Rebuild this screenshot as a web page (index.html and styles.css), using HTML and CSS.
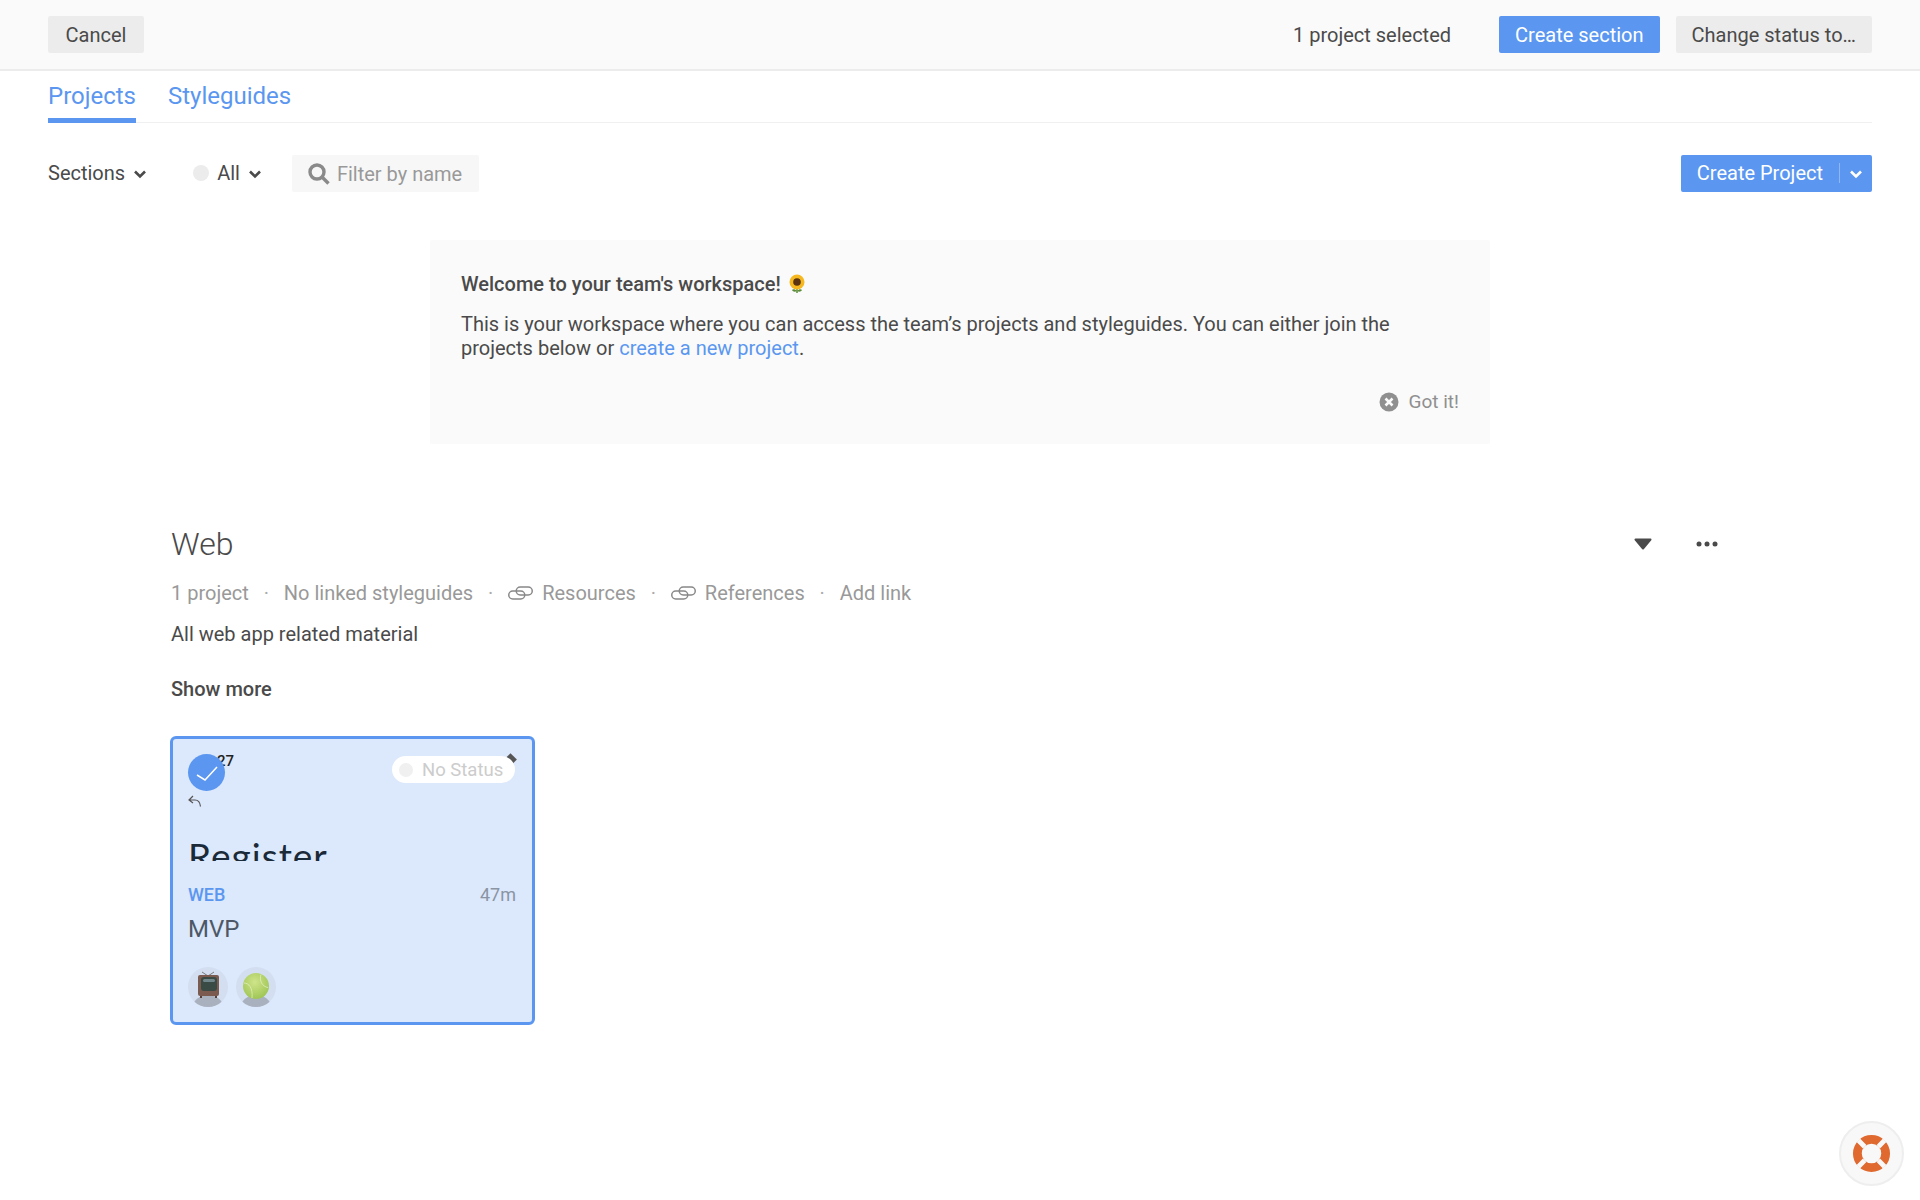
FILE: index.html
```html
<!DOCTYPE html>
<html lang="en">
<head>
	<meta charset="UTF-8">
	<title>Projects</title>
	<link rel="stylesheet" href="styles.css">
</head>
<body>
	<header class="action_bar">
		<button class="btn btn_grey cancel">Cancel</button>
		<span class="selected_count">1 project selected</span>
		<button class="btn btn_blue create_section">Create section</button>
		<button class="btn btn_grey change_status">Change status to…</button>
	</header>

	<nav class="tabs">
		<a class="tab tab_active">Projects</a>
		<a class="tab">Styleguides</a>
	</nav>

	<div class="filters">
		<span class="filter_item">Sections
			<svg class="chevron" viewBox="0 0 14 10"><path d="M2 2.5l5 5 5-5" /></svg>
		</span>
		<span class="filter_item status_filter"><i class="status_dot"></i>All
			<svg class="chevron" viewBox="0 0 14 10"><path d="M2 2.5l5 5 5-5" /></svg>
		</span>
		<label class="search">
			<svg class="search_icon" viewBox="0 0 22 22"><circle cx="9" cy="9" r="7" /><path d="M14 14l6.500 6.500" /></svg>
			Filter by name
		</label>
		<div class="create_project">
			<span class="create_label">Create Project</span>
			<svg class="chevron chevron_white" viewBox="0 0 14 10"><path d="M2 2.5l5 5 5-5" /></svg>
		</div>
	</div>

	<section class="welcome">
		<h3 class="welcome_title">Welcome to your team's workspace!
			<svg class="sunflower" viewBox="0 0 20 20">
				<path d="M10 13v6" stroke="#5b8c3a" stroke-width="1.5" />
				<path d="M10 17c-2-2-4-2-5-1 1 2 3 2 5 1zM10 17c2-2 4-2 5-1-1 2-3 2-5 1z" fill="#5b8c3a" />
				<circle cx="10" cy="8" r="7.5" fill="#f5b821" />
				<circle cx="10" cy="8" r="3.8" fill="#5a3312" />
			</svg>
		</h3>
		<p class="welcome_text">This is your workspace where you can access the team’s projects and styleguides. You can either join the projects below or <a class="link">create a new project</a>.</p>
		<div class="got_it">
			<svg class="got_it_icon" viewBox="0 0 20 20"><circle cx="10" cy="10" r="9.5" fill="#8f8f8f" /><path d="M6.5 6.5l7 7M13.5 6.5l-7 7" stroke="#fafafa" stroke-width="2.6" /></svg>
			Got it!
		</div>
	</section>

	<section class="project_section">
		<div class="section_head">
			<h2 class="section_title">Web</h2>
			<svg class="caret" viewBox="0 0 18 12"><path d="M1.500 1.500h15l-7.500 9z" stroke="#4a4a4a" stroke-width="2" stroke-linejoin="round" fill="#4a4a4a" /></svg>
			<svg class="more" viewBox="0 0 22 6"><circle cx="3" cy="3" r="2.5" /><circle cx="11" cy="3" r="2.5" /><circle cx="19" cy="3" r="2.5" /></svg>
		</div>
		<div class="meta">
			<span>1 project</span><i class="sep">·</i>
			<span>No linked styleguides</span><i class="sep">·</i>
			<span class="meta_link"><svg class="link_icon" viewBox="0 0 25 14"><rect x="0.750" y="5" width="16" height="8" rx="4" /><rect x="8.250" y="1" width="16" height="8" rx="4" /></svg>Resources</span><i class="sep">·</i>
			<span class="meta_link"><svg class="link_icon" viewBox="0 0 25 14"><rect x="0.750" y="5" width="16" height="8" rx="4" /><rect x="8.250" y="1" width="16" height="8" rx="4" /></svg>References</span><i class="sep">·</i>
			<span>Add link</span>
		</div>
		<p class="section_desc">All web app related material</p>
		<p class="show_more">Show more</p>

		<article class="card">
			<div class="thumb">
				<span class="thumb_time">27</span>
				<svg class="back_icon" viewBox="0 0 14 13"><path d="M5 1L1 5l4 3M1 5h6c3 0 5 2 5.500 6.500" /></svg>
				<div class="thumb_title">Register</div>
				<span class="check"><svg viewBox="0 0 37 37"><path d="M9 21l8 5 12-13" /></svg></span>
				<i class="thumb_corner"></i>
				<span class="status_pill"><i class="pill_dot"></i>No Status</span>
			</div>
			<div class="card_row">
				<span class="card_section">WEB</span>
				<span class="card_time">47m</span>
			</div>
			<div class="card_name">MVP</div>
			<div class="avatars">
				<span class="avatar">
					<svg viewBox="0 0 40 40">
						<path d="M14 5l6 4 6-4" fill="none" stroke="#77797c" stroke-width="1" />
						<rect x="10" y="8" width="21" height="21" rx="2" fill="#7b5a50" />
						<rect x="13" y="10" width="16" height="14" rx="3" fill="#3a4a44" />
						<rect x="15" y="12" width="12" height="3" rx="1.500" fill="#71868a" />
						<rect x="12" y="29" width="2" height="2" fill="#5a3f38" />
						<rect x="27" y="29" width="2" height="2" fill="#5a3f38" />
					</svg>
				</span>
				<span class="avatar">
					<svg viewBox="0 0 40 40">
						<defs>
							<radialGradient id="ball" cx="0.450" cy="0.350" r="0.700">
								<stop offset="0" stop-color="#cfe48a" />
								<stop offset="1" stop-color="#9cc451" />
							</radialGradient>
						</defs>
						<circle cx="20" cy="19" r="13" fill="url(#ball)" />
						<path d="M8 16c5 0 9 5 8 15M25 7.500c-2 6 1 12 7 13" fill="none" stroke="#e2efbf" stroke-width="0.800" />
					</svg>
				</span>
			</div>
		</article>
	</section>

	<a class="help">
		<svg viewBox="0 0 40 40">
			<circle cx="20" cy="20" r="14.500" fill="none" stroke="#e0692f" stroke-width="9" />
			<path d="M6.500 6.500l6.500 6.500M33.500 6.500l-6.500 6.500M6.500 33.500l6.500-6.500M33.500 33.500l-6.500-6.500" stroke="#f8f8f8" stroke-width="5" />
		</svg>
	</a>
</body>
</html>
```

FILE: styles.css
```css
*{
	box-sizing: border-box;
}
body{
	margin: 0;
	font-family: Roboto, "Liberation Sans", sans-serif;
	font-size: 20px;
	color: #4a4a4a;
	background: #fff;
}
p,h2,h3{
	margin: 0;
	font-weight: 400;
}
i{
	font-style: normal;
}
.action_bar{
	display: flex;
	align-items: center;
	height: 71px;
	padding: 0 48px;
	background: #fafafa;
	border-bottom: 2px solid #ececec;
}
.btn{
	height: 37px;
	padding: 0 16px;
	border: none;
	border-radius: 2px;
	font: 400 20px Roboto, sans-serif;
}
.btn_grey{
	background: #ececec;
	color: #4a4a4a;
}
.btn_blue{
	background: #5b97f0;
	color: #fff;
}
.cancel{
	width: 96px;
}
.selected_count{
	margin-left: auto;
}
.create_section{
	margin-left: 48px;
}
.change_status{
	margin-left: 16px;
}
.tabs{
	display: flex;
	gap: 32px;
	height: 52px;
	margin: 0 48px;
	border-bottom: 1px solid #f0f0f0;
}
.tab{
	height: 52px;
	padding-top: 9px;
	font-size: 24px;
	line-height: 32px;
	color: #5b97f0;
}
.tab_active{
	border-bottom: 5px solid #5b97f0;
}
.filters{
	display: flex;
	align-items: center;
	height: 37px;
	margin: 32px 48px 0;
}
.filter_item{
	display: flex;
	align-items: center;
	padding-bottom: 2px;
}
.chevron{
	width: 14px;
	height: 10px;
	margin-top: 2px;
	margin-left: 8px;
	fill: none;
	stroke: #4a4a4a;
	stroke-width: 2.6;
}
.chevron_white{
	stroke: #fff;
	margin-left: 9px;
}
.status_filter{
	margin-left: 46px;
}
.status_dot{
	width: 16px;
	height: 16px;
	margin-right: 8px;
	border-radius: 50%;
	background: #ececec;
}
.search{
	display: flex;
	align-items: center;
	width: 187px;
	height: 37px;
	margin-left: 30px;
	padding-left: 16px;
	background: #f7f7f7;
	border-radius: 2px;
	color: #999;
	white-space: nowrap;
}
.search_icon{
	width: 22px;
	height: 22px;
	margin-right: 7px;
	fill: none;
	stroke: #8a8a8a;
	stroke-width: 3.400;
}
.create_project{
	display: flex;
	align-items: center;
	height: 37px;
	margin-left: auto;
	padding: 0 9px 2px 16px;
	border-radius: 2px;
	background: #5b97f0;
	color: #fff;
}
.create_label{
	padding-right: 16px;
	line-height: 20px;
	border-right: 1px solid #8db7f5;
}
.welcome{
	width: 1060px;
	height: 204px;
	margin: 48px auto 0;
	padding: 32px 32px 0 31px;
	background: #fafafa;
	border-radius: 2px;
}
.welcome_title{
	display: flex;
	align-items: center;
	gap: 6px;
	font-size: 20px;
	font-weight: 500;
	line-height: 24px;
}
.sunflower{
	width: 20px;
	height: 20px;
}
.welcome_text{
	margin-top: 16px;
	line-height: 24px;
}
.link{
	color: #5b97f0;
}
.got_it{
	display: flex;
	align-items: center;
	justify-content: flex-end;
	gap: 10px;
	margin-top: 30px;
	margin-right: -1px;
	font-size: 19px;
	color: #8f8f8f;
	line-height: 24px;
}
.got_it_icon{
	width: 20px;
	height: 20px;
}
.project_section{
	padding: 0 171px;
}
.section_head{
	display: flex;
	align-items: center;
	height: 42px;
	margin-top: 79px;
}
.section_title{
	font-size: 32px;
	font-weight: 300;
	line-height: 42px;
}
.caret{
	width: 18px;
	height: 12px;
	margin-left: auto;
}
.more{
	width: 22px;
	height: 6px;
	margin-left: 44px;
	margin-right: 31px;
	fill: #4a4a4a;
}
.meta{
	display: flex;
	align-items: center;
	height: 24px;
	margin-top: 16px;
	color: #999;
}
.sep{
	width: 35px;
	text-align: center;
	color: #aaa;
}
.meta_link{
	display: flex;
	align-items: center;
	gap: 9px;
}
.link_icon{
	width: 25px;
	height: 14px;
	fill: none;
	stroke: #888;
	stroke-width: 1.500;
}
.section_desc{
	margin-top: 17px;
	line-height: 24px;
}
.show_more{
	margin-top: 31px;
	font-weight: 500;
	line-height: 24px;
}
.card{
	width: 365px;
	height: 289px;
	margin: 35px 0 0 -1px;
	border: 3px solid #5b97f0;
	border-radius: 6px;
	background: #dce8fb;
}
.thumb{
	position: relative;
	height: 122px;
	padding: 14px 15px 0;
	overflow: hidden;
}
.thumb_time{
	display: block;
	margin-left: 29px;
	font-size: 15px;
	font-weight: 500;
	line-height: 16px;
	color: #222;
}
.back_icon{
	display: block;
	width: 14px;
	height: 13px;
	margin-top: 26px;
	fill: none;
	stroke: #555;
	stroke-width: 1.200;
}
.thumb_title{
	margin: 26px 0 0;
	font-family: Lato, sans-serif;
	font-size: 37px;
	line-height: 44px;
	letter-spacing: 1px;
	color: #1a2a38;
}
.check{
	position: absolute;
	top: 15px;
	left: 15px;
	width: 37px;
	height: 37px;
	border-radius: 50%;
	background: #5b97f0;
}
.check svg{
	display: block;
	fill: none;
	stroke: #fff;
	stroke-width: 1.500;
}
.thumb_corner{
	position: absolute;
	top: 16px;
	left: 333px;
	width: 9px;
	height: 9px;
	background: #555;
	transform: rotate(45deg);
}
.status_pill{
	position: absolute;
	top: 17px;
	left: 219px;
	display: flex;
	align-items: center;
	width: 123px;
	height: 27px;
	padding-left: 7px;
	border-radius: 14px;
	background: #fff;
	font-size: 18.500px;
	color: #ccc;
	white-space: nowrap;
}
.pill_dot{
	width: 14px;
	height: 14px;
	margin-right: 9px;
	border-radius: 50%;
	background: #f0f0f0;
}
.card_row{
	display: flex;
	justify-content: space-between;
	height: 24px;
	margin-top: 22px;
	padding: 0 16px 0 15px;
	font-size: 18px;
	line-height: 24px;
}
.card_section{
	font-weight: 500;
	color: #5b97f0;
}
.card_time{
	color: #8a94a3;
}
.card_name{
	margin-top: 6px;
	padding: 0 15px;
	font-size: 24px;
	line-height: 32px;
	color: #4d5866;
}
.avatars{
	display: flex;
	gap: 8px;
	margin-top: 22px;
	padding: 0 15px;
}
.avatar{
	position: relative;
	width: 40px;
	height: 40px;
	border-radius: 50%;
	background: #d3dff1;
	overflow: hidden;
}
.avatar::after{
	content: "";
	position: absolute;
	left: 5px;
	bottom: -12px;
	width: 30px;
	height: 24px;
	border-radius: 50%;
	background: #a9b1bf;
}
.avatar svg{
	position: relative;
	z-index: 1;
	display: block;
}
.help{
	position: fixed;
	left: 1839px;
	top: 1121px;
	width: 65px;
	height: 65px;
	padding: 11px;
	border: 2px solid #eee;
	border-radius: 50%;
	background: #f8f8f8;
}
.help svg{
	display: block;
}
```
